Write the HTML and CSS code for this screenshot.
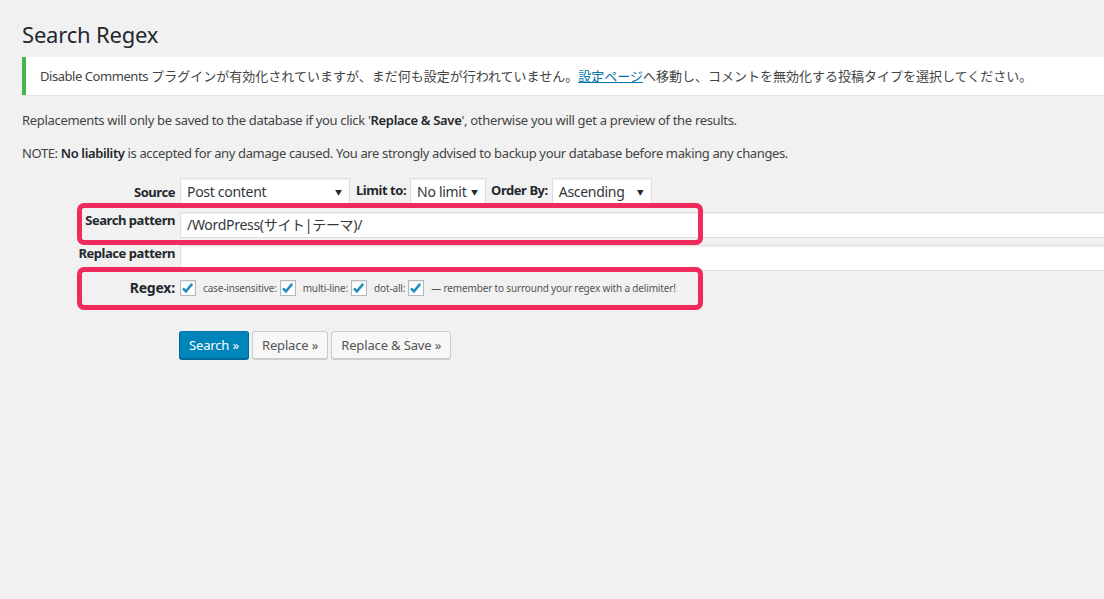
FILE: index.html
```html
<!DOCTYPE html>
<html lang="ja">
<head>
<meta charset="utf-8">
<title>Search Regex</title>
<link rel="stylesheet" href="styles.css">
</head>
<body>
<div class="wrap">
  <h1 class="title">Search Regex</h1>
  <div class="notice">
    <p><span class="lat">Disable Comments</span> プラグインが有効化されていますが、まだ何も設定が行われていません。<a href="#">設定ページ</a>へ移動し、コメントを無効化する投稿タイプを選択してください。</p>
  </div>
  <p class="info">Replacements will only be saved to the database if you click '<strong>Replace &amp; Save</strong>', otherwise you will get a preview of the results.</p>
  <p class="info info-note">NOTE: <strong>No liability</strong> is accepted for any damage caused. You are strongly advised to backup your database before making any changes.</p>

  <form class="search-form">
    <div class="row row-source">
      <label class="lbl lbl-center">Source</label>
      <div class="field">
        <div class="select sel-source"><span>Post content</span><span class="arrow">▼</span></div>
        <span class="inline-lbl">Limit to:</span>
        <div class="select sel-limit"><span>No limit</span><span class="arrow">▼</span></div>
        <span class="inline-lbl">Order By:</span>
        <div class="select sel-order"><span>Ascending</span><span class="arrow">▼</span></div>
      </div>
    </div>
    <div class="row row-input">
      <label class="lbl lbl-top">Search pattern</label>
      <div class="field"><div class="text-input">/WordPress(サイト|テーマ)/</div></div>
    </div>
    <div class="row row-input row-last">
      <label class="lbl lbl-top">Replace pattern</label>
      <div class="field"><div class="text-input"></div></div>
    </div>
    <div class="row row-regex">
      <label class="lbl lbl-center lbl-regex">Regex:</label>
      <div class="field opts">
        <span class="cb"><svg viewBox="0 0 16 16" width="16" height="16"><path d="M3.2 8.4 L6.3 11.6 L13 3.6" fill="none" stroke="#1e8cbe" stroke-width="2.6"/></svg></span>
        <span class="opt">case-insensitive:</span>
        <span class="cb"><svg viewBox="0 0 16 16" width="16" height="16"><path d="M3.2 8.4 L6.3 11.6 L13 3.6" fill="none" stroke="#1e8cbe" stroke-width="2.6"/></svg></span>
        <span class="opt">multi-line:</span>
        <span class="cb"><svg viewBox="0 0 16 16" width="16" height="16"><path d="M3.2 8.4 L6.3 11.6 L13 3.6" fill="none" stroke="#1e8cbe" stroke-width="2.6"/></svg></span>
        <span class="opt">dot-all:</span>
        <span class="cb"><svg viewBox="0 0 16 16" width="16" height="16"><path d="M3.2 8.4 L6.3 11.6 L13 3.6" fill="none" stroke="#1e8cbe" stroke-width="2.6"/></svg></span>
        <span class="opt note">— remember to surround your regex with a delimiter!</span>
      </div>
    </div>
    <div class="buttons">
      <button type="button" class="btn btn-primary">Search »</button>
      <button type="button" class="btn">Replace »</button>
      <button type="button" class="btn">Replace &amp; Save »</button>
    </div>
    <div class="mark mark-1"></div>
    <div class="mark mark-2"></div>
  </form>
</div>
</body>
</html>
```

FILE: styles.css
```css
html, body {
  margin: 0;
  padding: 0;
  background: #f1f1f1;
  overflow: hidden;
}
body {
  font-family: "Noto Sans", "Noto Sans CJK JP", sans-serif;
  font-size: 13px;
  letter-spacing: -0.32px;
  color: #444;
  width: 1104px;
  height: 599px;
}
.wrap {
  padding: 0 0 0 22px;
}
.title {
  margin: 20px 0 0;
  font-size: 22px;
  letter-spacing: -0.2px;
  line-height: 29px;
  font-weight: 400;
  color: #23282d;
}
.notice {
  margin-top: 8px;
  height: 38px;
  box-sizing: border-box;
  background: #fff;
  border-left: 4px solid #46b450;
  box-shadow: 0 1px 1px rgba(0,0,0,.06);
  padding: 0 0 0 14px;
  display: flex;
  align-items: center;
}
.notice p {
  margin: 0;
  font-size: 13px;
  line-height: 19px;
  letter-spacing: 0;
  color: #444;
}
.notice .lat {
  letter-spacing: -0.45px;
}
.notice a {
  color: #0073aa;
  text-decoration: underline;
}
.info {
  margin: 15px 0 0;
  line-height: 20px;
}
.info + .info {
  margin-top: 13px;
}
.info-note {
  letter-spacing: -0.37px;
}
.info strong {
  color: #23282d;
  font-weight: 600;
}
.search-form {
  position: relative;
  margin-top: 15px;
  padding-left: 56px;
}
.row {
  display: grid;
  grid-template-columns: 97px 1fr;
  column-gap: 5px;
}
.lbl {
  display: flex;
  justify-content: flex-end;
  white-space: nowrap;
  font-weight: 700;
  font-size: 13px;
  letter-spacing: -0.45px;
  color: #23282d;
  line-height: 16px;
}
.lbl-center {
  align-self: center;
}
.lbl-top {
  align-self: start;
}
.lbl-regex {
  font-size: 14px;
  letter-spacing: -0.2px;
}
.field {
  display: flex;
  align-items: center;
  min-width: 0;
}
.row-source {
  height: 27px;
  margin-bottom: 7px;
}
.row-input {
  height: 26px;
  margin-bottom: 7px;
}
.row-input.row-last {
  margin-bottom: 0;
}
.row-regex {
  margin-top: 9px;
  height: 16px;
}
.select {
  box-sizing: border-box;
  height: 27px;
  background: #fff;
  border: 1px solid #ddd;
  box-shadow: inset 0 1px 2px rgba(0,0,0,.05);
  display: flex;
  align-items: center;
  justify-content: space-between;
  padding: 0 7px 0 6px;
  font-size: 14px;
  letter-spacing: -0.3px;
  color: #32373c;
  white-space: nowrap;
  flex: none;
}
.select .arrow {
  font-size: 7px;
  color: #23282d;
  letter-spacing: 0;
}
.sel-source { width: 170px; }
.sel-limit { width: 76px; margin-right: 5px; }
.sel-order { width: 100px; }
.inline-lbl {
  font-weight: 700;
  font-size: 13px;
  letter-spacing: -0.45px;
  color: #23282d;
  margin: 0 4px 0 6px;
  line-height: 16px;
  position: relative;
  top: -2px;
  white-space: nowrap;
}
.sel-limit + .inline-lbl { margin-left: 0; }
.text-input {
  box-sizing: border-box;
  width: 1000px;
  flex: none;
  height: 26px;
  background: #fff;
  border: 1px solid #ddd;
  border-right: none;
  box-shadow: inset 0 1px 2px rgba(0,0,0,.07);
  padding: 0 6px;
  font-size: 14px;
  letter-spacing: -0.3px;
  line-height: 24px;
  color: #32373c;
  white-space: nowrap;
}
.cb {
  box-sizing: border-box;
  width: 16px;
  height: 16px;
  border: 1px solid #b4b9be;
  background: #fff;
  box-shadow: inset 0 1px 2px rgba(0,0,0,.1);
  display: inline-flex;
  flex: none;
}
.cb svg {
  display: block;
  margin: -1px 0 0 -1px;
}
.opt {
  font-size: 10px;
  letter-spacing: -0.16px;
  color: #555;
  margin: 0 3px 0 7px;
  white-space: nowrap;
}
.buttons {
  margin: 35px 0 0 101px;
  display: flex;
  gap: 3px;
}
.btn {
  box-sizing: border-box;
  height: 28px;
  padding: 0 9px;
  border: 1px solid #ccc;
  border-radius: 3px;
  background: #f7f7f7;
  box-shadow: 0 1px 0 #ccc;
  color: #555;
  font-family: "Noto Sans", sans-serif;
  font-size: 13px;
  letter-spacing: -0.15px;
  line-height: 26px;
}
.btn-primary {
  background: #0085ba;
  border-color: #0073aa #006799 #006799;
  box-shadow: 0 1px 0 #006799;
  color: #fff;
}
.mark {
  position: absolute;
  box-sizing: border-box;
  border: 5px solid #ee2b5b;
  border-radius: 7px;
  left: 55px;
  width: 626px;
}
.mark-1 {
  top: 25px;
  height: 42px;
}
.mark-2 {
  top: 89px;
  height: 43px;
}
```
